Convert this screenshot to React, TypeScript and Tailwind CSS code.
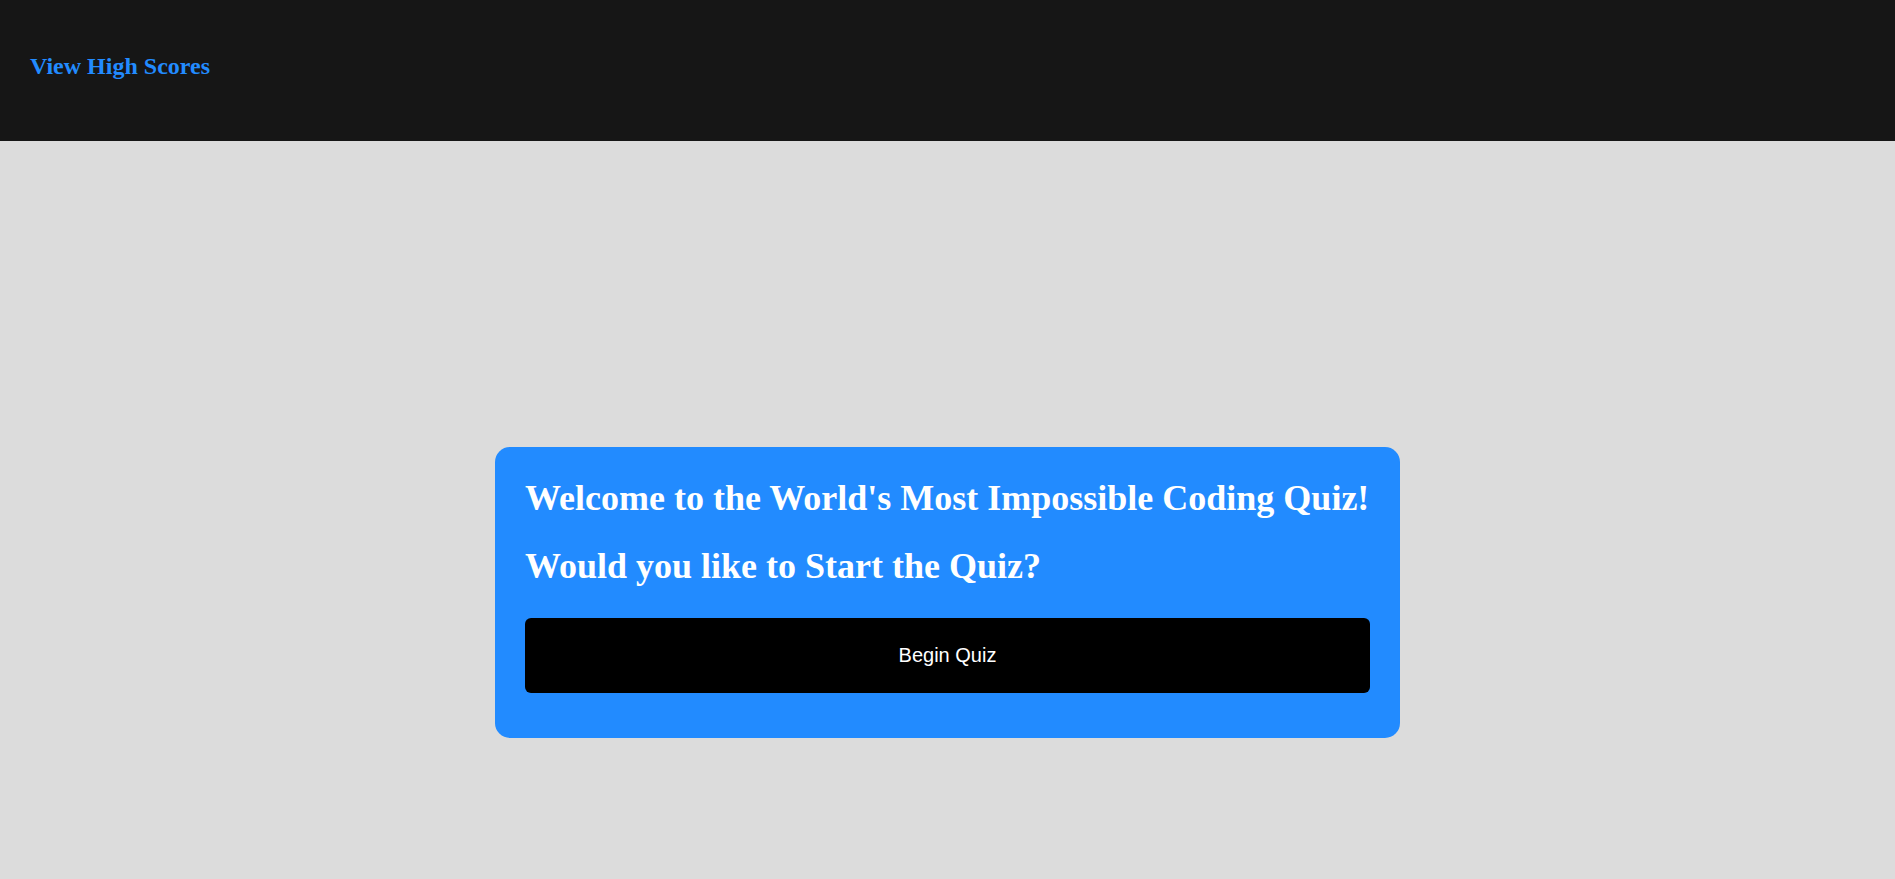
import React from 'react';

const serif = "font-['Liberation_Serif','Times_New_Roman',serif]";

export default function App() {
  return (
    <div className="min-h-[879px] bg-[#dcdcdc]">
      <header className="h-[141px] bg-[#161616] px-[30px] pt-[53px]">
        <a href="#" className={`${serif} block w-fit text-[24px] leading-[27px] font-bold text-[#228bff]`}>
          View High Scores
        </a>
      </header>

      <main className="flex justify-center pt-[306px]">
        <section className="w-[905px] rounded-[15px] bg-[#228bff] px-[30px] pt-[31px] pb-[45px]">
          <h1 className={`${serif} text-[36px] leading-[40px] font-bold text-white`}>
            Welcome to the World's Most Impossible Coding Quiz!
          </h1>
          <h2 className={`${serif} mt-[28px] text-[36px] leading-[40px] font-bold text-white`}>
            Would you like to Start the Quiz?
          </h2>
          <button className="mt-[32px] flex h-[75px] w-full items-center justify-center rounded-[6px] bg-black pb-[2px] font-['Liberation_Sans',Arial,sans-serif] text-[20px] text-white">
            Begin Quiz
          </button>
        </section>
      </main>
    </div>
  );
}
